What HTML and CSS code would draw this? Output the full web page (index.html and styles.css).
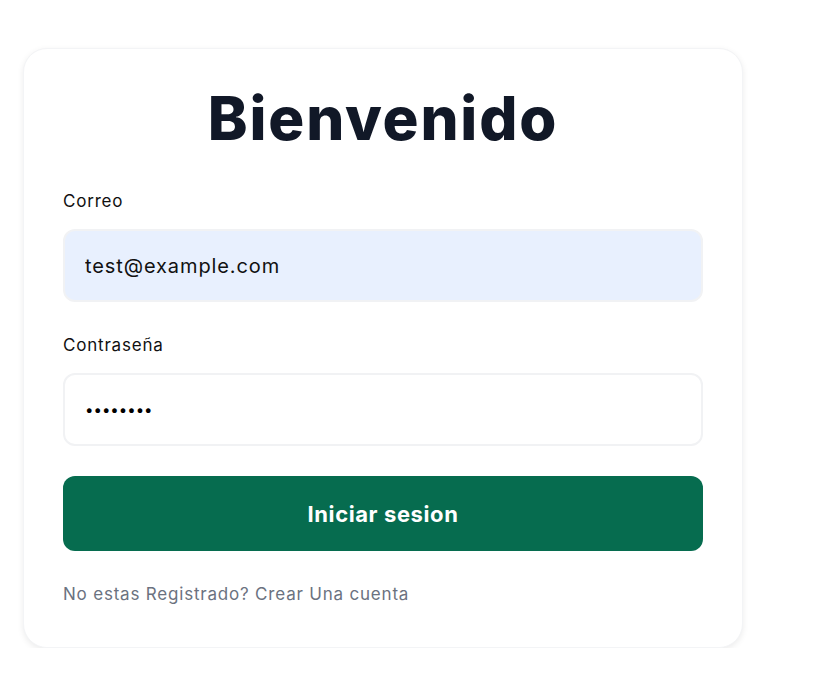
FILE: index.html
```html
<!DOCTYPE html>
<html lang="es">
<head>
<meta charset="utf-8">
<title>Bienvenido</title>
<link rel="stylesheet" href="styles.css">
</head>
<body>
<main class="page">
  <form class="card">
    <h1 class="title">Bienvenido</h1>
    <div class="field">
      <label class="label" for="email">Correo</label>
      <input class="input input-filled" id="email" type="email" value="test@example.com">
    </div>
    <div class="field">
      <label class="label" for="pass">Contraseña</label>
      <input class="input input-pass" id="pass" type="password" value="password">
    </div>
    <button class="btn" type="button">Iniciar sesion</button>
    <p class="foot">No estas Registrado? Crear Una cuenta</p>
  </form>
</main>
</body>
</html>
```

FILE: styles.css
```css
* { box-sizing: border-box; }
html, body { margin: 0; padding: 0; background: #ffffff; }
body { font-family: "Inter", "Noto Sans", sans-serif; color: #111827; }
.page { padding: 48px 0 0 23px; display: flex; }
.card {
  width: 720px;
  height: 600px;
  background: #fff;
  border: 1px solid #f3f4f6;
  border-radius: 24px;
  box-shadow: 0 2px 6px rgba(0,0,0,0.08);
  padding: 39px 39px 40px;
  display: flex;
  flex-direction: column;
}
.title {
  margin: 0;
  text-align: center;
  font-size: 60px;
  line-height: 60px;
  font-weight: 800;
  color: #111827;
  letter-spacing: 1.8px;
}
.field { display: flex; flex-direction: column; margin-top: 41px; }
.field + .field { margin-top: 31px; }
.label { font-size: 17px; line-height: 24px; color: #111; margin-bottom: 16px; letter-spacing: 0.8px; }
.input {
  height: 73px;
  border: 2px solid #f1f2f4;
  border-radius: 12px;
  padding: 0 20px;
  font-family: inherit;
  font-size: 20px;
  letter-spacing: 0.9px;
  color: #111;
  background: #fff;
  outline: none;
}
.input-filled { background: #e8f0fe; }
.input-pass { font-size: 15px; letter-spacing: 0; color: #000; }
.btn {
  margin-top: 30px;
  height: 75px;
  border: none;
  border-radius: 12px;
  background: #066c4f;
  color: #fff;
  font-family: inherit;
  font-size: 22px;
  font-weight: 700;
  letter-spacing: 0.6px;
}
.foot { margin: 31px 0 0; font-size: 17px; line-height: 24px; color: #6b7280; letter-spacing: 0.8px; }
```
